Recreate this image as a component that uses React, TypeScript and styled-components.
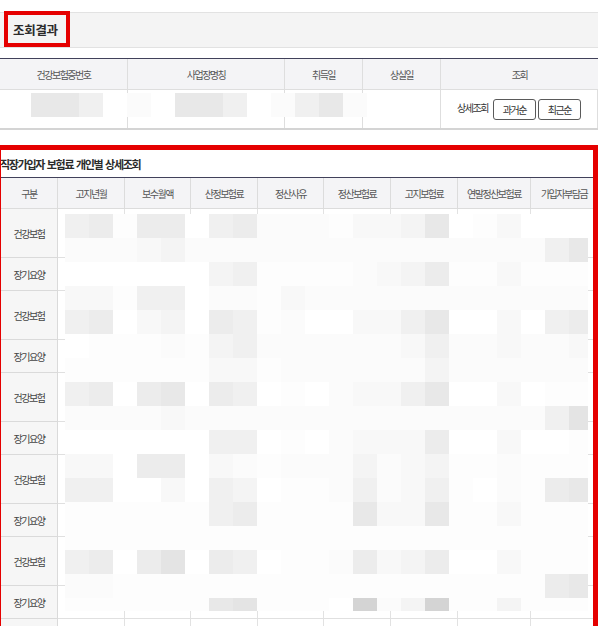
import React from 'react';
import styled, { createGlobalStyle } from 'styled-components';

const Global = createGlobalStyle`
  html, body { margin: 0; padding: 0; background: #fff; }
  body {
    font-family: "Noto Sans CJK KR", "Noto Sans", sans-serif;
    color: #333;
    overflow: hidden;
  }
  * { box-sizing: border-box; }
`;

const LEVELS = ['#ffffff', '#fdfdfd', '#fbfbfb', '#f8f8f8', '#f4f4f4', '#f0f0f0', '#ececec', '#e8e8e8', '#e4e4e4', '#d4d4d4'];

const TOP_MOSAIC = '77502077502572';

const BODY_MOSAIC = [
  '5616605622213347013000',
  '2223422222222222222257',
  '0000004511112346113111',
  '3315502213222222222222',
  '5603406512003357003056',
  '0111214522222235223223',
  '1111113312222224222222',
  '5606706501023357003011',
  '2222322222222222222258',
  '0000005501023336003001',
  '3306603212224234112111',
  '5500305401125235102167',
  '1111115611117337113111',
  '1111111111111111111111',
  '5606806501126346003111',
  '2211111111111111111167',
  '1111117811109249114111',
];

const Page = styled.div`
  width: 598px;
  padding-top: 12px;
  overflow: hidden;
`;

const TitleBar = styled.div`
  display: flex;
  height: 36px;
  padding-left: 4px;
  background: #f4f4f4;
  border-top: 1px solid #e2e2e2;
  border-bottom: 1px solid #e2e2e2;
`;

const TitleBox = styled.div`
  display: flex;
  align-items: center;
  height: 36px;
  margin-top: -2px;
  padding: 0 8px 0 5px;
  border: 4px solid #e50000;
  font-size: 12.5px;
  font-weight: 700;
  letter-spacing: -0.3px;
  color: #2b2b2b;
`;

const SummaryTable = styled.div`
  margin-top: 10px;
  border-top: 1px solid #41415a;
  border-bottom: 2px solid #d4d4d4;
`;

const SummaryRow = styled.div<{ $head?: boolean }>`
  position: relative;
  display: grid;
  grid-template-columns: 128px 157px 78px 78px 157px;
  height: ${p => (p.$head ? '31px' : '38px')};
  background: ${p => (p.$head ? '#f4f4f6' : '#fff')};
  border-bottom: ${p => (p.$head ? '1px solid #dedede' : 'none')};
`;

const SummaryCell = styled.div`
  display: flex;
  align-items: center;
  justify-content: center;
  border-right: 1px solid #dedede;
  font-size: 10px;
  letter-spacing: -1.5px;
  color: #555;
  &:last-child { border-right: none; }
`;

const LookupLabel = styled.span`
  font-size: 10px;
  letter-spacing: -1.5px;
  color: #333;
  margin-right: 3px;
  margin-top: -4px;
`;

const SortButton = styled.button`
  width: 43px;
  height: 21px;
  margin-left: 2px;
  padding: 0;
  background: #fff;
  border: 1px solid #5a5a5a;
  border-radius: 3px;
  font-family: inherit;
  font-size: 10px;
  letter-spacing: -1.5px;
  color: #333;
`;

const Mosaic = styled.div<{ $top: number; $left: number; $cols: string; $rows: string }>`
  position: absolute;
  top: ${p => p.$top}px;
  left: ${p => p.$left}px;
  display: grid;
  grid-template-columns: ${p => p.$cols};
  grid-template-rows: ${p => p.$rows};
  pointer-events: none;
`;

const Block = styled.div<{ $c: string }>`
  background: ${p => p.$c};
`;

const Section = styled.section`
  margin: 15px 0 0 -4px;
  border: 5px solid #e50000;
  border-bottom: none;
  overflow: hidden;
`;

const SectionTitle = styled.div`
  display: flex;
  align-items: center;
  height: 27px;
  margin-left: -1px;
  font-size: 11px;
  font-weight: 700;
  letter-spacing: -1.3px;
  word-spacing: 1.5px;
  color: #2b2b2b;
  white-space: nowrap;
`;

const COLS = '57px 67px 66px 67px 66px 67px 67px 73px 66px';

const DetailTable = styled.div`
  width: 596px;
  border-top: 1px solid #41415a;
`;

const HeadRow = styled.div`
  display: grid;
  grid-template-columns: ${COLS};
  height: 31px;
  background: #f4f4f6;
  border-bottom: 1px solid #dcdcdc;
`;

const HeadCell = styled.div`
  display: flex;
  align-items: center;
  justify-content: center;
  border-right: 1px solid #dcdcdc;
  font-size: 10px;
  letter-spacing: -1.5px;
  color: #555;
  white-space: nowrap;
  &:last-child { border-right: none; }
`;

const Body = styled.div`
  position: relative;
`;

const BodyRow = styled.div<{ $tall: boolean }>`
  display: grid;
  grid-template-columns: ${COLS};
  height: ${p => (p.$tall ? '49px' : '33px')};
`;

const LabelCell = styled.div`
  display: flex;
  align-items: center;
  justify-content: center;
  background: #f6f6f6;
  border-right: 1px solid #dadada;
  border-bottom: 1px solid #dadada;
  font-size: 10px;
  letter-spacing: -1.5px;
  color: #444;
`;

const DataCell = styled.div`
  border-right: 1px solid #e2e2e2;
  border-bottom: 1px solid #e0e0e0;
  &:last-child { border-right: none; }
`;

const headers = ['구분', '고지년월', '보수월액', '산정보험료', '정산사유', '정산보험료', '고지보험료', '연말정산보험료', '가입자부담금'];

const rows: { label: string; tall: boolean }[] = [];
for (let i = 0; i < 5; i++) {
  rows.push({ label: '건강보험', tall: true }, { label: '장기요양', tall: false });
}
rows.push({ label: '', tall: true });

export default function App() {
  return (
    <Page>
      <Global />
      <TitleBar>
        <TitleBox>조회결과</TitleBox>
      </TitleBar>

      <SummaryTable>
        <SummaryRow $head>
          <SummaryCell>건강보험증번호</SummaryCell>
          <SummaryCell>사업장명칭</SummaryCell>
          <SummaryCell>취득일</SummaryCell>
          <SummaryCell>상실일</SummaryCell>
          <SummaryCell>조회</SummaryCell>
        </SummaryRow>
        <SummaryRow>
          <SummaryCell />
          <SummaryCell />
          <SummaryCell />
          <SummaryCell />
          <SummaryCell>
            <LookupLabel>상세조회</LookupLabel>
            <SortButton>과거순</SortButton>
            <SortButton>최근순</SortButton>
          </SummaryCell>
          <Mosaic $top={3} $left={31} $cols="repeat(14, 24px)" $rows="24px">
            {TOP_MOSAIC.split('').map((d, i) => (
              <Block key={i} $c={LEVELS[Number(d)]} />
            ))}
          </Mosaic>
        </SummaryRow>
      </SummaryTable>

      <Section>
        <SectionTitle>직장가입자 보험료 개인별 상세조회</SectionTitle>
        <DetailTable>
          <HeadRow>
            {headers.map(h => (
              <HeadCell key={h}>{h}</HeadCell>
            ))}
          </HeadRow>
          <Body>
            {rows.map((row, i) => (
              <BodyRow key={i} $tall={row.tall}>
                <LabelCell>{row.label}</LabelCell>
                {headers.slice(1).map(h => (
                  <DataCell key={h} />
                ))}
              </BodyRow>
            ))}
            <Mosaic $top={5} $left={64} $cols="repeat(21, 24px) 19px" $rows="repeat(16, 24px) 13px">
              {BODY_MOSAIC.flatMap((row, r) =>
                row.split('').map((d, c) => <Block key={`${r}-${c}`} $c={LEVELS[Number(d)]} />)
              )}
            </Mosaic>
          </Body>
        </DetailTable>
      </Section>
    </Page>
  );
}
